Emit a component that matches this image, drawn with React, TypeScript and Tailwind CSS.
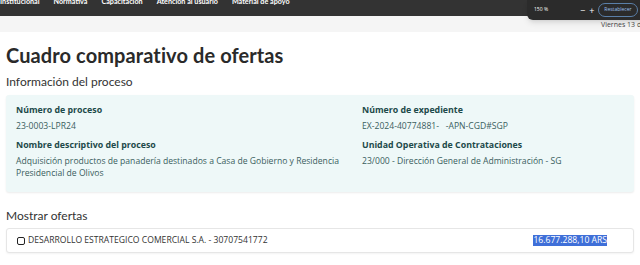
import React from "react";

const navItems = ["Institucional", "Normativa", "Capacitación", "Atención al usuario", "Material de apoyo"];

function Field({ label, value }: { label: string; value: React.ReactNode }) {
  return (
    <div className="flex flex-col">
      <div className="text-[8.8px] font-bold text-[#1d4a4a] leading-[12px]">{label}</div>
      <div className="mt-[4px] text-[8.6px] text-[#3a5e5e] leading-[12px]">{value}</div>
    </div>
  );
}

export default function App() {
  return (
    <div className="relative w-[640px] h-[265px] overflow-hidden bg-white" style={{ fontFamily: "'Open Sans', sans-serif" }}>
      {/* top navigation, cut off by the window */}
      <div className="h-4 bg-[#333333] overflow-hidden flex gap-[14px]" style={{ fontFamily: "Lato, sans-serif" }}>
        {navItems.map((n) => (
          <span key={n} className="-mt-[3px] text-[7.2px] font-bold text-white whitespace-nowrap">
            {n}
          </span>
        ))}
      </div>
      <div className="h-4 bg-[#f5f5f5]" />

      {/* zoom popup */}
      <div className="absolute top-0 left-[527px] w-[120px] h-[20px] bg-[#2b2b2b] rounded-bl-[6px] flex items-center pl-[7px] text-white shadow-md">
        <span className="text-[5px] whitespace-nowrap">150 %</span>
        <span className="ml-[32px] text-[9px] leading-none">−</span>
        <span className="ml-[4px] text-[9px] leading-none">+</span>
        <span className="ml-[4px] h-[14px] px-[5px] rounded-full border border-[#5a7fa8] text-[#9cc2ee] text-[5px] flex items-center whitespace-nowrap">
          Restablecer
        </span>
      </div>
      <div className="absolute top-[20px] left-[601px] text-[7px] text-[#444] whitespace-nowrap">Viernes 13 de</div>

      <div className="px-[6px]">
        <h1 className="mt-[10px] text-[20px] font-bold text-[#2a2a2a] leading-[26px] tracking-[0.1px]" style={{ fontFamily: "Lato, sans-serif" }}>
          Cuadro comparativo de ofertas
        </h1>
        <h2 className="mt-[6px] text-[12px] text-[#333] leading-[16px]" style={{ fontFamily: "Lato, sans-serif" }}>
          Información del proceso
        </h2>

        <div className="mt-[5px] h-[97px] bg-[#eef8f8] rounded-[3px] shadow-[0_1px_2px_rgba(0,0,0,0.08)] px-[10px] pt-[9px] grid grid-cols-[346px_1fr]">
          <div className="flex flex-col gap-[7px]">
            <Field label="Número de proceso" value="23-0003-LPR24" />
            <Field
              label="Nombre descriptivo del proceso"
              value={
                <>
                  Adquisición productos de panadería destinados a Casa de Gobierno y Residencia
                  <br />
                  Presidencial de Olivos
                </>
              }
            />
          </div>
          <div className="flex flex-col gap-[7px]">
            <Field label="Número de expediente" value={<span className="whitespace-pre">EX-2024-40774881-   -APN-CGD#SGP</span>} />
            <Field label="Unidad Operativa de Contrataciones" value="23/000 - Dirección General de Administración - SG" />
          </div>
        </div>

        <h2 className="mt-[16px] text-[12px] text-[#333] leading-[16px]" style={{ fontFamily: "Lato, sans-serif" }}>
          Mostrar ofertas
        </h2>
        <div className="mt-[4px] h-[25px] border border-[#e6e6e6] rounded-[3px] bg-white flex items-center pl-[10px] pr-[26px] shadow-[0_1px_2px_rgba(0,0,0,0.05)]">
          <span className="w-[8px] h-[8px] border-[1.5px] border-[#222] rounded-[2px] mr-[3px]" />
          <span className="text-[8.6px] text-[#333]">DESARROLLO ESTRATEGICO COMERCIAL S.A. - 30707541772</span>
          <span className="ml-auto text-[8.6px] bg-[#3f6fd8] text-white leading-[11px]">16.677.288,10 ARS</span>
        </div>
      </div>
    </div>
  );
}
